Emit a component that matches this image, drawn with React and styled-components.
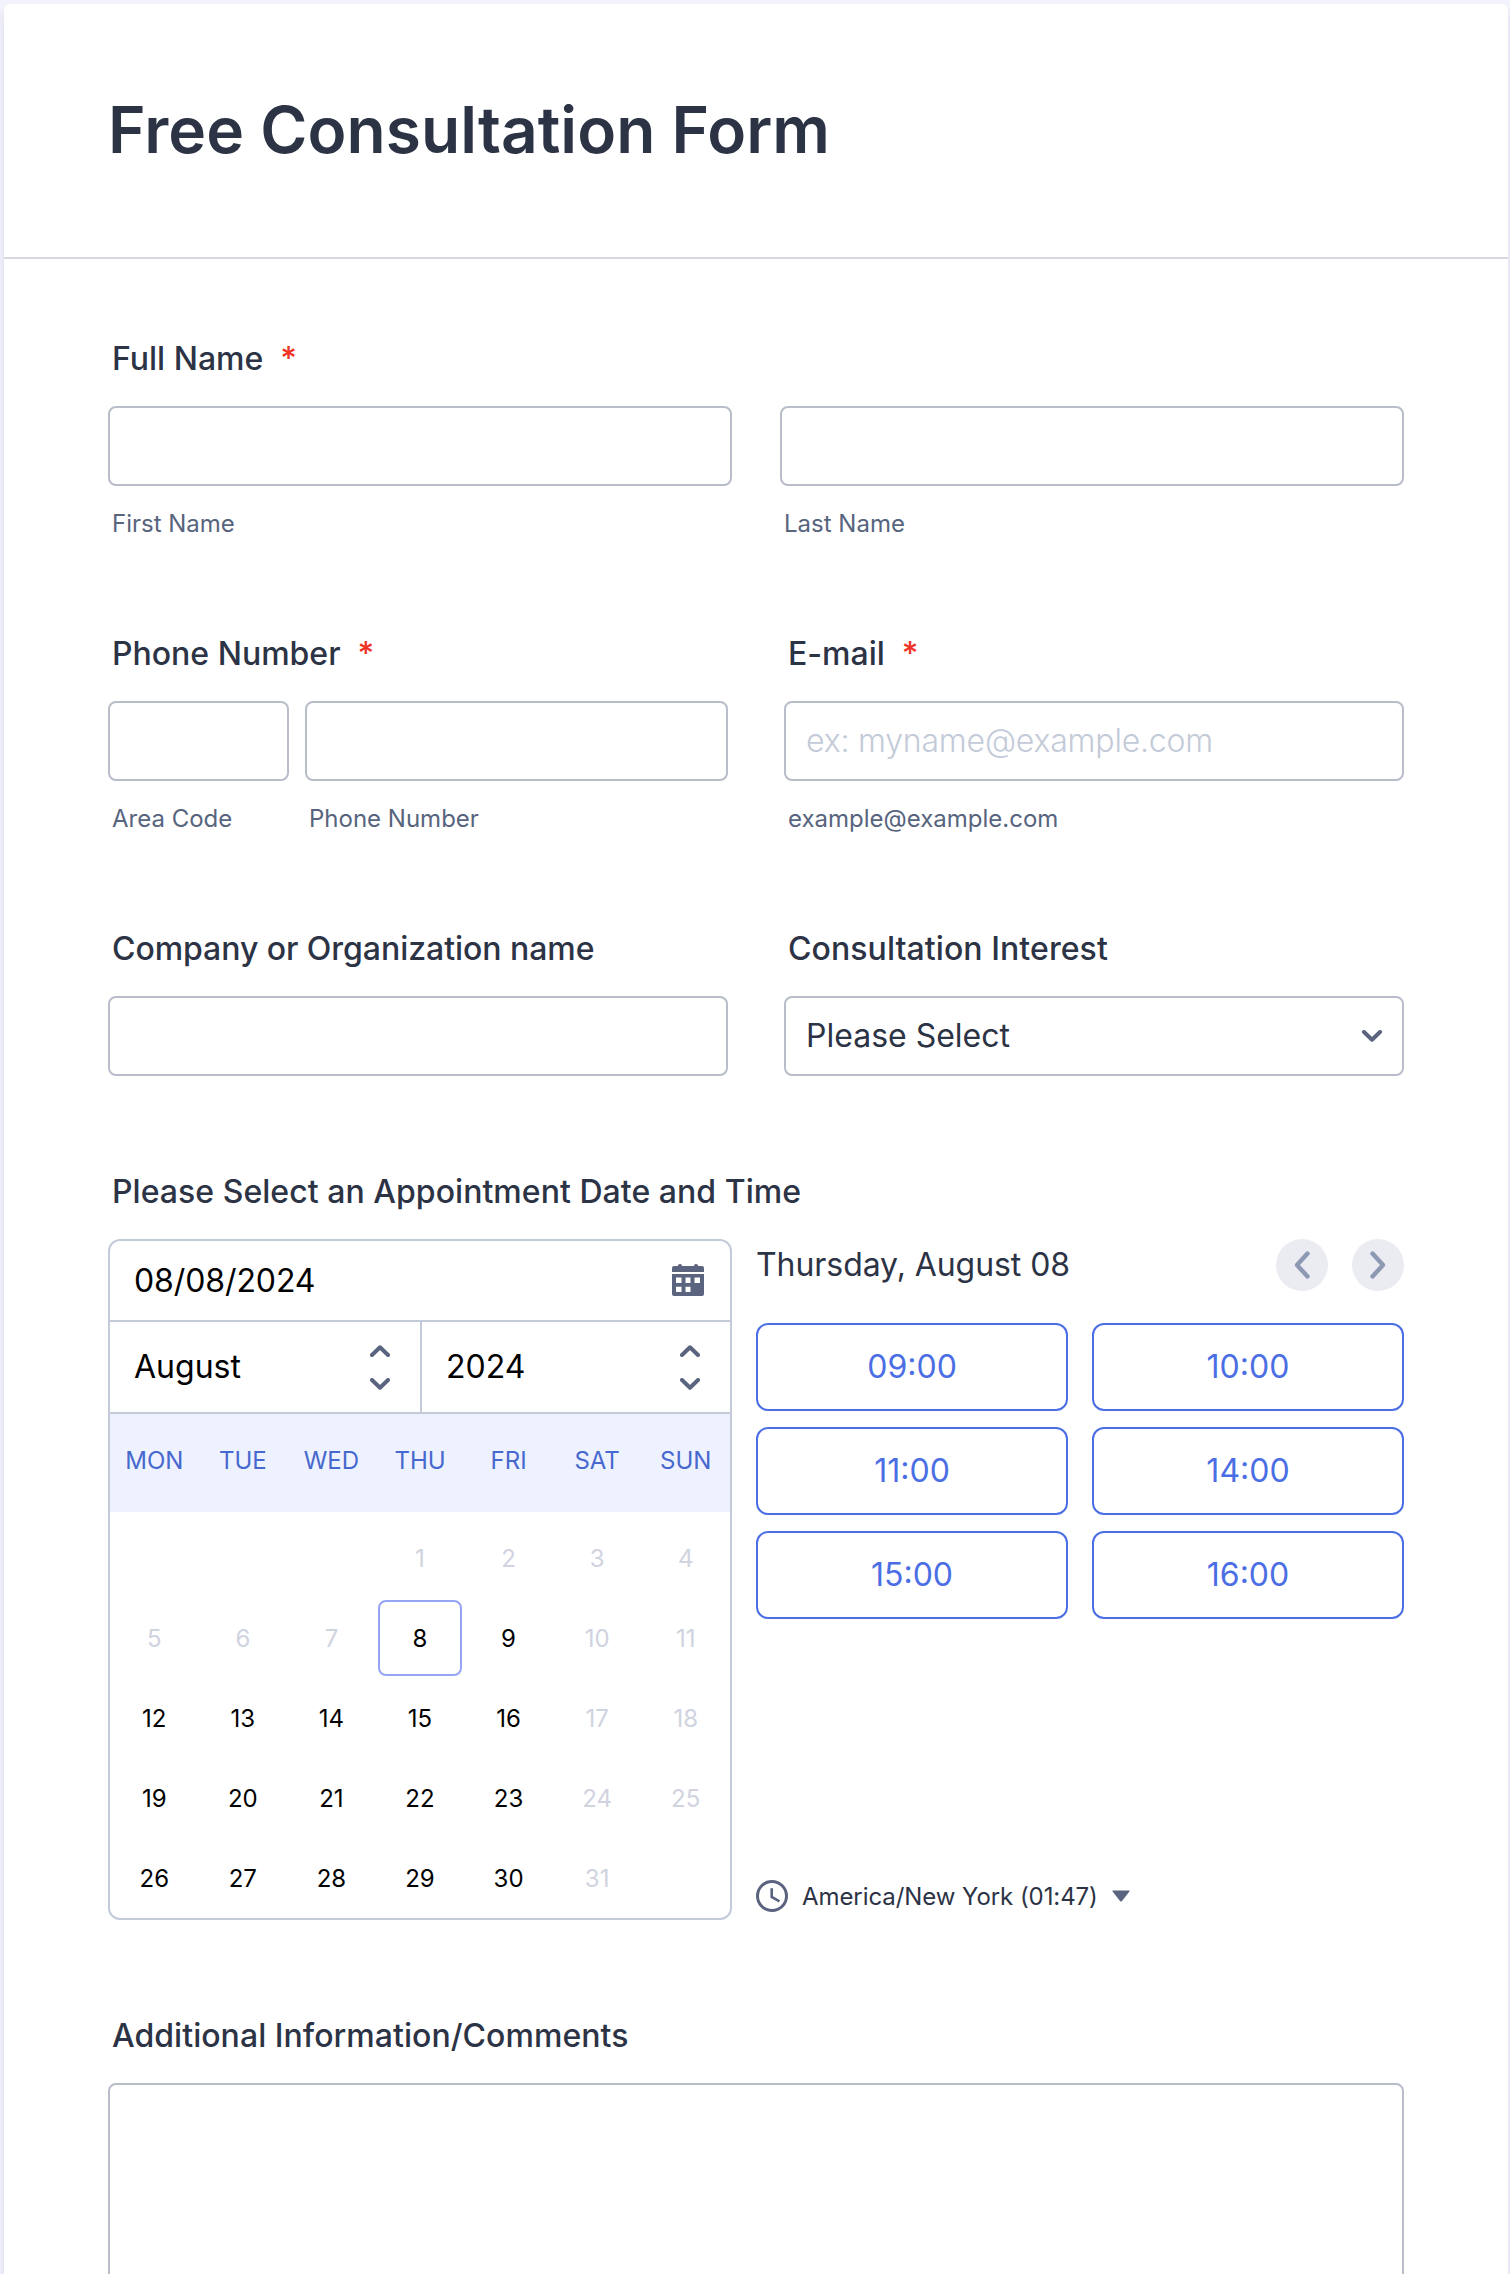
import React from "react";
import styled, { createGlobalStyle } from "styled-components";

const Global = createGlobalStyle`
  *, *::before, *::after { box-sizing: border-box; }
  html, body { margin: 0; padding: 0; }
  body {
    height: 2274px;
    overflow: hidden;
    background: #f3f3fe;
    color: #2c3345;
    font-family: Inter, "Liberation Sans", sans-serif;
  }
  input, select, textarea, button { font-family: inherit; color: inherit; }
`;

const Page = styled.main`
  height: 2274px;
  padding: 4px 2px 0 4px;
  overflow: hidden;
`;

const Card = styled.form`
  height: 2400px;
  background: #fff;
  border-radius: 6px;
  box-shadow: 0 8px 8px rgba(87, 100, 126, 0.18);
`;

const Header = styled.header`
  height: 255px;
  padding: 86px 104px 0;
  border-bottom: 2px solid #d7d8e1;
`;

const Title = styled.h1`
  margin: 0;
  font-size: 64px;
  font-weight: 600;
  line-height: 80px;
  letter-spacing: 0.06px;
`;

const Body = styled.div`
  display: flex;
  flex-direction: column;
  gap: 96px;
  padding: 80px 104px 0;
`;

const Row = styled.div`
  display: grid;
  grid-template-columns: ${(p) => p.$columns || "1fr 1fr"};
  column-gap: ${(p) => p.$gap}px;
`;

const Field = styled.section`
  display: flex;
  flex-direction: column;
  gap: 27px;
`;

const Label = styled.label`
  padding-left: 4px;
  font-size: 32px;
  font-weight: 500;
  line-height: 40px;
  letter-spacing: ${(p) => p.$tracking || 0}px;
`;

const Required = styled.span`
  margin-left: 17px;
  color: #ef3326;
`;

const Part = styled.div`
  display: flex;
  flex-direction: column;
  gap: 23px;
  min-width: 0;
`;

const Input = styled.input`
  width: 100%;
  height: 80px;
  padding: 0 20px 2px;
  border: 2px solid #b8bdc9;
  border-radius: 8px;
  background: #fff;
  outline: none;
  font-size: 32px;
  &::placeholder { color: #c3cad8; font-weight: 300; letter-spacing: -0.2px; opacity: 1; }
`;

const Hint = styled.span`
  height: 29px;
  padding-left: 4px;
  color: #57647e;
  font-size: 24px;
  line-height: 30px;
`;

const Select = styled.div`
  display: flex;
  align-items: center;
  justify-content: space-between;
  height: 80px;
  padding: 0 20px;
  border: 2px solid #b8bdc9;
  border-radius: 8px;
  font-size: 32px;
`;

const Value = styled.span`
  padding-bottom: 2px;
`;

const TextArea = styled.textarea`
  display: block;
  width: 100%;
  height: 320px;
  border: 2px solid #b8bdc9;
  border-radius: 8px;
  resize: none;
  outline: none;
`;

const Calendar = styled.div`
  height: 681px;
  border: 2px solid #c3cad8;
  border-radius: 12px;
  overflow: hidden;
  color: #000;
`;

const DateBar = styled.div`
  display: flex;
  align-items: center;
  justify-content: space-between;
  height: 81px;
  padding: 0 26px 1px 24px;
  border-bottom: 2px solid #c3cad8;
  font-size: 32px;
  letter-spacing: -0.1px;
`;

const Pickers = styled.div`
  display: grid;
  grid-template-columns: 310px 1fr;
  height: 92px;
  border-bottom: 2px solid #c3cad8;
`;

const Picker = styled.div`
  display: flex;
  align-items: center;
  justify-content: space-between;
  padding: 0 30px 0 24px;
  font-size: 32px;
  & + & { border-left: 2px solid #c3cad8; }
`;

const Weekdays = styled.div`
  display: grid;
  grid-template-columns: repeat(7, 1fr);
  height: 98px;
  padding-top: 32px;
  background: #eef2fe;
  color: #4768ce;
  font-size: 24px;
  line-height: 30px;
  text-align: center;
`;

const Days = styled.div`
  display: grid;
  grid-template-columns: repeat(7, 1fr);
  grid-auto-rows: 76px;
  row-gap: 4px;
  padding-top: 8px;
`;

const Day = styled.div`
  display: flex;
  align-items: center;
  justify-content: center;
  margin: 0 2px;
  border: 2px solid ${(p) => (p.$selected ? "#95a5f3" : "transparent")};
  border-radius: 8px;
  color: ${(p) => (p.$off ? "#d0d3e0" : "#000")};
  font-size: 24px;
`;

const Slots = styled.div`
  display: flex;
  flex-direction: column;
`;

const SlotHeader = styled.div`
  display: flex;
  align-items: center;
  height: 52px;
  gap: 24px;
  font-size: 32px;
`;

const SlotDate = styled.span`
  flex: 1;
  padding-bottom: 2px;
  letter-spacing: -0.06px;
`;

const RoundButton = styled.button`
  display: grid;
  place-items: center;
  width: 52px;
  height: 52px;
  padding: 0;
  border: 0;
  border-radius: 50%;
  background: #ebecf2;
`;

const SlotGrid = styled.div`
  display: grid;
  grid-template-columns: 1fr 1fr;
  gap: 16px 24px;
  margin-top: 32px;
`;

const Slot = styled.button`
  height: 88px;
  padding: 0 0 2px;
  border: 2px solid #4b6ee4;
  border-radius: 12px;
  background: #fff;
  font-size: 32px;
  && { color: #4b6ee4; }
`;

const Zone = styled.div`
  display: flex;
  align-items: center;
  height: 32px;
  margin-top: auto;
  margin-bottom: 8px;
  gap: 14px;
  font-size: 24px;
  letter-spacing: -0.07px;
`;

const Chevron = ({ up }) => (
  <svg width="20" height="12" viewBox="0 0 20 12" fill="none" stroke="#5b647e" strokeWidth="4" strokeLinecap="round" strokeLinejoin="round">
    <path d={up ? "M2 10 10 2.300 18 10" : "M2 2 10 9.700 18 2"} />
  </svg>
);

const StepperBox = styled.span`
  display: flex;
  flex-direction: column;
  gap: 21px;
`;

const Stepper = () => (
  <StepperBox>
    <Chevron up />
    <Chevron />
  </StepperBox>
);

const Arrow = ({ right }) => (
  <svg width="18" height="30" viewBox="0 0 18 30" fill="none" stroke="#8d99b2" strokeWidth="4.4" strokeLinecap="round" strokeLinejoin="round">
    <path d={right ? "M3.5 3.5 14 15 3.5 26.5" : "M14.5 3.5 4 15 14.5 26.5"} />
  </svg>
);

const CalendarIcon = () => (
  <svg width="32" height="32" viewBox="0 0 32 32" fill="#5b647e">
    <path d="M0 8V4Q0 2 2 2H6V1.500Q6 0 8 0T10 1.500V2H22V1.500Q22 0 24 0T26 1.500V2H30Q32 2 32 4V8Z" />
    <path fillRule="evenodd" d="M0 10H32V30Q32 32 30 32H2Q0 32 0 30ZM4 13.500V19H9.500V13.500ZM13.500 13.500V19H18.500V13.500ZM22.500 13.500V19H28V13.500ZM4 22.700V28H9.500V22.700ZM13.500 22.700V28H18.500V22.700Z" />
  </svg>
);

const ClockIcon = () => (
  <svg width="32" height="32" viewBox="0 0 32 32" fill="none" stroke="#5b647e">
    <circle cx="16" cy="16" r="14.500" strokeWidth="3" />
    <path d="M15.700 8.300V17L23.500 21.300" strokeWidth="2.600" />
  </svg>
);

const Caret = () => (
  <svg width="18" height="12" viewBox="0 0 18 12" fill="#5b647e">
    <path d="M1 0.500H17Q18.200 0.500 17.400 1.500L10 11Q9 12 8 11L0.600 1.500Q-0.200 0.500 1 0.500Z" />
  </svg>
);

const WEEK = ["MON", "TUE", "WED", "THU", "FRI", "SAT", "SUN"];
const TIMES = ["09:00", "10:00", "11:00", "14:00", "15:00", "16:00"];
const DAYS = [...Array(3).fill(null), ...Array.from({ length: 31 }, (_, i) => i + 1)];
const isOff = (day, column) => day < 8 || column > 4;

export default function App() {
  return (
    <>
      <Global />
      <Page>
        <Card>
          <Header>
            <Title>Free Consultation Form</Title>
          </Header>
          <Body>
            <Field>
              <Label>Full Name<Required>*</Required></Label>
              <Row $gap={48}>
                <Part><Input /><Hint>First Name</Hint></Part>
                <Part><Input /><Hint>Last Name</Hint></Part>
              </Row>
            </Field>
            <Row $gap={56}>
              <Field>
                <Label>Phone Number<Required>*</Required></Label>
                <Row $gap={16} $columns="181px 1fr">
                  <Part><Input /><Hint>Area Code</Hint></Part>
                  <Part><Input /><Hint>Phone Number</Hint></Part>
                </Row>
              </Field>
              <Field>
                <Label>E-mail<Required>*</Required></Label>
                <Part>
                  <Input placeholder="ex: myname@example.com" />
                  <Hint>example@example.com</Hint>
                </Part>
              </Field>
            </Row>
            <Row $gap={56}>
              <Field>
                <Label $tracking={-0.05}>Company or Organization name</Label>
                <Input />
              </Field>
              <Field>
                <Label $tracking={0.07}>Consultation Interest</Label>
                <Select><Value>Please Select</Value><Chevron /></Select>
              </Field>
            </Row>
            <Field>
              <Label $tracking={0.04}>Please Select an Appointment Date and Time</Label>
              <Row $gap={24} $columns="624px 1fr">
                <Calendar>
                  <DateBar>08/08/2024<CalendarIcon /></DateBar>
                  <Pickers>
                    <Picker><Value>August</Value><Stepper /></Picker>
                    <Picker><Value>2024</Value><Stepper /></Picker>
                  </Pickers>
                  <Weekdays>{WEEK.map((d) => <span key={d}>{d}</span>)}</Weekdays>
                  <Days>
                    {DAYS.map((d, i) => (
                      <Day key={i} $selected={d === 8} $off={isOff(d, i % 7)}>{d}</Day>
                    ))}
                  </Days>
                </Calendar>
                <Slots>
                  <SlotHeader>
                    <SlotDate>Thursday, August 08</SlotDate>
                    <RoundButton type="button" aria-label="Previous day"><Arrow /></RoundButton>
                    <RoundButton type="button" aria-label="Next day"><Arrow right /></RoundButton>
                  </SlotHeader>
                  <SlotGrid>
                    {TIMES.map((t) => <Slot type="button" key={t}>{t}</Slot>)}
                  </SlotGrid>
                  <Zone><ClockIcon />America/New York (01:47)<Caret /></Zone>
                </Slots>
              </Row>
            </Field>
            <Field>
              <Label $tracking={0.04}>Additional Information/Comments</Label>
              <TextArea />
            </Field>
          </Body>
        </Card>
      </Page>
    </>
  );
}
